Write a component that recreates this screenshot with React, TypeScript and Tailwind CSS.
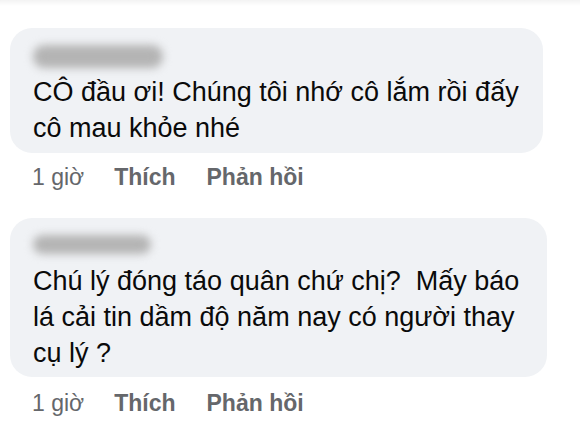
function Meta() {
  return (
    <div className="flex items-center h-[30px] pl-[32px] text-[23px] text-[#65676b]">
      <span>1 giờ</span>
      <span className="ml-[30px] font-bold">Thích</span>
      <span className="ml-[31px] font-bold">Phản hồi</span>
    </div>
  );
}

export default function App() {
  return (
    <div
      className="w-[580px] h-[427px] bg-white overflow-hidden"
      style={{ fontFamily: '"Liberation Sans", Arial, sans-serif' }}
    >
      <div className="h-[6px] bg-gradient-to-b from-[#f3f3f3] to-white" />
      <div className="pt-[22px] pl-[10px]">
        <div className="w-[533px] rounded-[22px] bg-[#f0f2f5] pl-[23px] pr-[10px] pt-[17px] pb-[7px]">
          <div className="h-[23px] w-[130px] rounded-full bg-[#b4b4b4] blur-[4px]" />
          <p className="mt-[6px] text-[27px] leading-[36px] text-[#0a0a0a] whitespace-nowrap">
            CÔ đầu ơi! Chúng tôi nhớ cô lắm rồi đấy
            <br />
            cô mau khỏe nhé
          </p>
        </div>
      </div>
      <div className="mt-[9px]">
        <Meta />
      </div>
      <div className="mt-[26px] pl-[10px]">
        <div className="w-[537px] rounded-[22px] bg-[#f0f2f5] pl-[23px] pr-[10px] pt-[17px] pb-[6px]">
          <div className="h-[19px] w-[118px] rounded-full bg-[#b4b4b4] blur-[4px]" />
          <p className="mt-[9px] text-[27px] leading-[36px] text-[#0a0a0a] whitespace-pre">
            {"Chú lý đóng táo quân chứ chị?  Mấy báo"}
            <br />
            lá cải tin dầm độ năm nay có người thay
            <br />
            cụ lý ?
          </p>
        </div>
      </div>
      <div className="mt-[11px]">
        <Meta />
      </div>
    </div>
  );
}
